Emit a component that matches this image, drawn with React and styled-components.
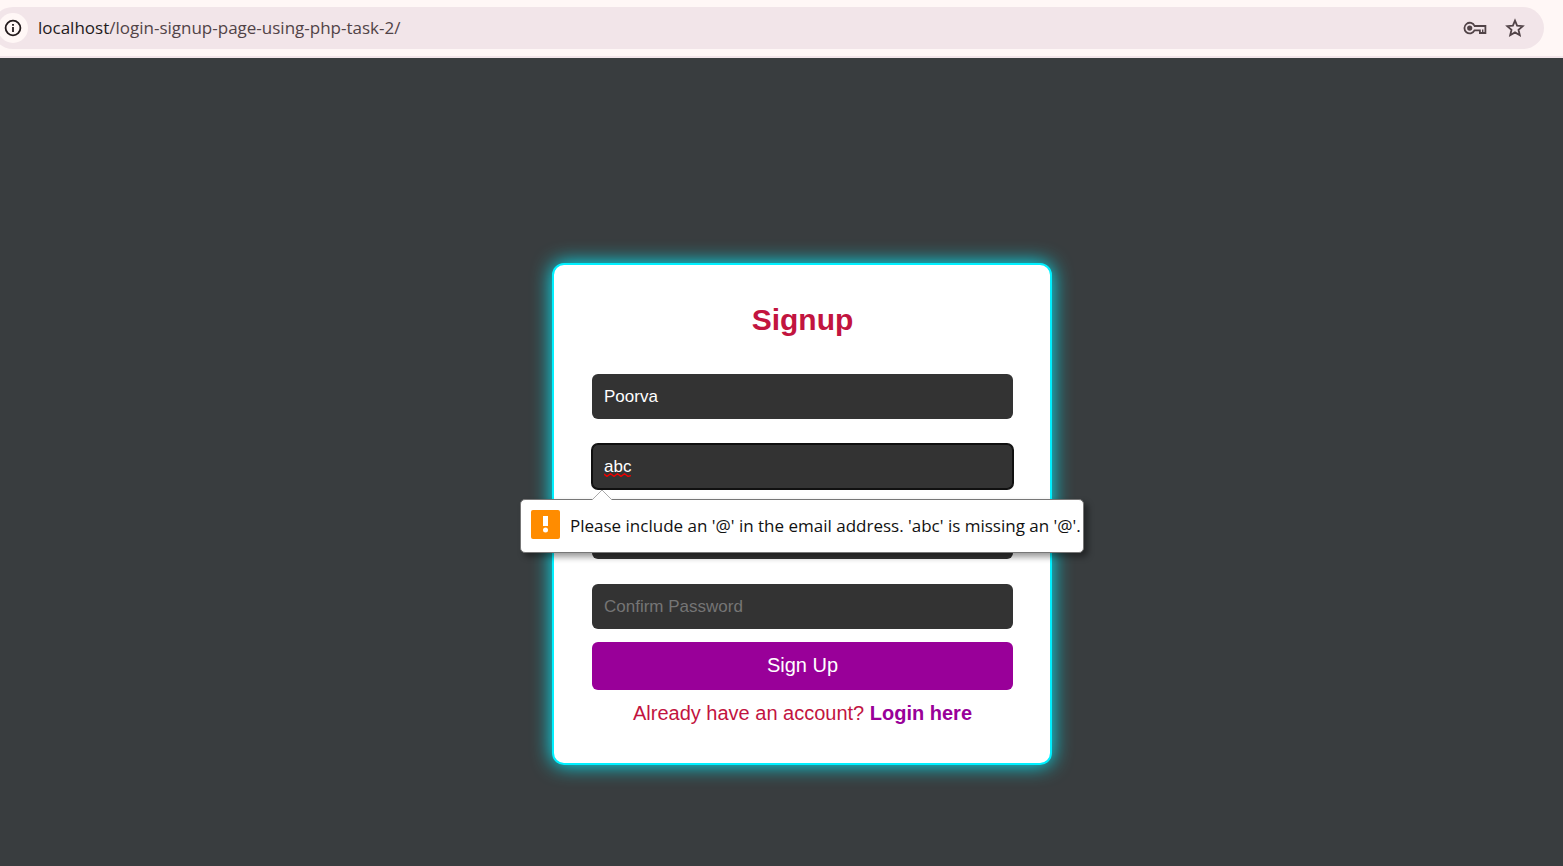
import React, { useState } from "react";
import styled, { createGlobalStyle } from "styled-components";

const GlobalStyle = createGlobalStyle`
  * { box-sizing: border-box; }
  body {
    margin: 0;
    background: #393d3f;
    font-family: "Liberation Sans", Arial, sans-serif;
  }
`;

const Page = styled.div`
  min-height: 100vh;
  display: flex;
  flex-direction: column;
  overflow-x: hidden;
`;

const BrowserBar = styled.header`
  display: flex;
  height: 58px;
  padding: 7px 19px 9px 0;
  background: #fff7f6;
  border-bottom: 2px solid #f2e5e9;
`;

const AddressBar = styled.div`
  flex: 1;
  display: flex;
  align-items: center;
  height: 42px;
  margin-left: -8px;
  padding: 0 17px 0 6px;
  gap: 16px;
  border-radius: 21px;
  background: #f2e5e9;
`;

const IconButton = styled.button`
  display: flex;
  align-items: center;
  justify-content: center;
  flex: none;
  width: ${(p) => p.$size}px;
  height: ${(p) => p.$size}px;
  padding: 0;
  border: 0;
  border-radius: 50%;
  background: ${(p) => (p.$filled ? "#fff7f6" : "transparent")};
  color: ${(p) => (p.$filled ? "#231a1c" : "#514347")};
`;

const Url = styled.div`
  flex: 1;
  margin-left: -6px;
  font: 17px/24px "Open Sans", "Noto Sans", sans-serif;
  color: #514347;
  white-space: nowrap;
`;

const Host = styled.span`
  color: #1f1a1c;
`;

const Main = styled.main`
  flex: 1;
  display: flex;
  justify-content: center;
  align-items: flex-start;
  padding: 205px 0 64px 41px;
`;

const Card = styled.form`
  width: 500px;
  padding: 36px 37px 38px 38px;
  display: flex;
  flex-direction: column;
  border: 2px solid #00f0ff;
  border-radius: 12px;
  background: #fff;
  box-shadow: 0 0 20px #00f0ff;
`;

const Title = styled.h1`
  margin: 0 0 36px;
  font-size: 30px;
  line-height: 37px;
  text-align: center;
  color: #c2143f;
`;

const Fields = styled.div`
  display: flex;
  flex-direction: column;
  gap: 25px;
`;

const Field = styled.div`
  position: relative;
  display: flex;
`;

const Input = styled.input`
  width: 100%;
  height: 45px;
  padding: 0 12px;
  border: 0;
  border-radius: 6px;
  outline: 0;
  background: #333;
  color: #fff;
  font: 17px "Liberation Sans", Arial, sans-serif;
  box-shadow: ${(p) => (p.$focused ? "0 0 0 1px #101010, inset 0 0 0 1px #101010" : "none")};

  &::placeholder { color: #757575; opacity: 1; }
`;

const SpellingMark = styled.svg`
  position: absolute;
  left: 12px;
  top: 29px;
  width: 27px;
  height: 4px;
`;

const Bubble = styled.div`
  position: absolute;
  z-index: 1;
  top: 55px;
  left: -72px;
  display: flex;
  align-items: center;
  gap: 10px;
  width: 564px;
  height: 54px;
  padding: 0 0 0 10px;
  border: 1px solid #777;
  border-radius: 5px;
  background: #fff;
  box-shadow: 4px 4px 6px rgba(0, 0, 0, 0.4);
  font: 17px/24px "Open Sans", "Noto Sans", sans-serif;
  color: #111;
  white-space: nowrap;
`;

const BubbleArrow = styled.svg`
  position: absolute;
  left: 70px;
  top: -11px;
  width: 22px;
  height: 12px;
`;

const WarningIcon = styled.svg`
  flex: none;
  width: 29px;
  height: 29px;
  margin-bottom: 4px;
`;

const SubmitButton = styled.button`
  height: 48px;
  margin-top: 13px;
  padding: 0 0 2px;
  border: 0;
  border-radius: 6px;
  background: #990099;
  color: #fff;
  font: 20px "Liberation Sans", Arial, sans-serif;
`;

const Footer = styled.p`
  margin: 12px 0 0;
  font-size: 20px;
  line-height: 23px;
  text-align: center;
  color: #c2143f;
`;

const LoginLink = styled.a`
  color: #990099;
  font-weight: bold;
  text-decoration: none;
`;

function InfoIcon() {
  return (
    <svg width="18" height="18" viewBox="0 0 18 18" fill="none" stroke="currentColor" strokeWidth="1.8">
      <circle cx="9" cy="9" r="7.4" />
      <path d="M9 8v5M9 5v1.8" />
    </svg>
  );
}

function KeyIcon() {
  return (
    <svg width="24" height="14" viewBox="0 0 24 14" fill="none" stroke="currentColor" strokeWidth="1.8">
      <path d="M11.6 5H22.4V12H16.9V9.4H11.5A5.3 5.3 0 1 1 11.6 5Z" />
      <circle cx="6.7" cy="7.1" r="2.6" fill="currentColor" stroke="none" />
      <path d="M19.7 8.6V11.4" strokeWidth="1.4" />
    </svg>
  );
}

function StarIcon() {
  return (
    <svg width="20" height="20" viewBox="0 0 20 20" fill="none" stroke="currentColor" strokeWidth="1.8">
      <path d="M10 2.6L12.1 7.6L17.7 8.1L13.5 11.8L14.8 17.2L10 14.4L5.2 17.2L6.5 11.8L2.3 8.1L7.9 7.6Z" />
    </svg>
  );
}

export default function App() {
  const [name, setName] = useState("Poorva");
  const [email, setEmail] = useState("abc");

  return (
    <Page>
      <GlobalStyle />
      <BrowserBar>
        <AddressBar>
          <IconButton type="button" $size={30} $filled aria-label="View site information">
            <InfoIcon />
          </IconButton>
          <Url>
            <Host>localhost</Host>/login-signup-page-using-php-task-2/
          </Url>
          <IconButton type="button" $size={24} aria-label="Manage passwords">
            <KeyIcon />
          </IconButton>
          <IconButton type="button" $size={24} aria-label="Bookmark this page">
            <StarIcon />
          </IconButton>
        </AddressBar>
      </BrowserBar>
      <Main>
        <Card noValidate onSubmit={(e) => e.preventDefault()}>
          <Title>Signup</Title>
          <Fields>
            <Field>
              <Input aria-label="Name" value={name} onChange={(e) => setName(e.target.value)} />
            </Field>
            <Field>
              <Input
                type="email"
                aria-label="Email"
                aria-describedby="email-error"
                $focused
                value={email}
                onChange={(e) => setEmail(e.target.value)}
              />
              <SpellingMark viewBox="0 0 27 4" fill="none" stroke="#f00000" strokeWidth="1.4" aria-hidden="true">
                <path d="M0 1L3 3.4L6.5 .8L10 3.4L13.5 .8L17 3.4L20.5 .8L24 3.4L27 2.6" />
              </SpellingMark>
              <Bubble id="email-error" role="alert">
                <BubbleArrow viewBox="0 0 22 12" aria-hidden="true">
                  <path d="M1 12V11L11 1L21 11V12Z" fill="#fff" />
                  <path d="M1 11L11 1L21 11" fill="none" stroke="#aaa" />
                </BubbleArrow>
                <WarningIcon viewBox="0 0 29 29" aria-hidden="true">
                  <rect width="29" height="29" rx="2" fill="#ff8c00" />
                  <path d="M12 6H17V16H12Z" fill="#fff" />
                  <circle cx="14.5" cy="20.1" r="2.5" fill="#fff" />
                </WarningIcon>
                <span>Please include an '@' in the email address. 'abc' is missing an '@'.</span>
              </Bubble>
            </Field>
            <Field>
              <Input type="password" aria-label="Password" />
            </Field>
            <Field>
              <Input type="password" aria-label="Confirm Password" placeholder="Confirm Password" />
            </Field>
          </Fields>
          <SubmitButton type="submit">Sign Up</SubmitButton>
          <Footer>
            Already have an account? <LoginLink href="#login">Login here</LoginLink>
          </Footer>
        </Card>
      </Main>
    </Page>
  );
}
